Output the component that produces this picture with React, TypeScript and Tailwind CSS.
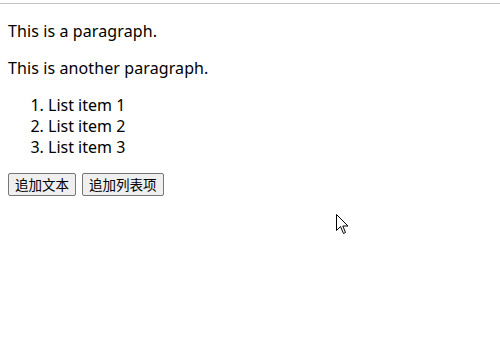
import React from 'react'

const Cursor = () => (
  <svg
    className="absolute left-[336px] top-[214px]"
    width="13"
    height="21"
    viewBox="0 0 13 21"
  >
    <path
      d="M0.5 0.5 L0.5 16.5 L4.5 12.5 L7.5 19.5 L9.5 18.5 L6.8 12 L12 12 Z"
      fill="#fff"
      stroke="#000"
      strokeWidth="1"
      strokeLinejoin="miter"
    />
  </svg>
)

const App = () => {
  const items = ['List item 1', 'List item 2', 'List item 3']

  return (
    <div className="relative w-[500px] h-[340px] bg-white overflow-hidden font-['Noto_Sans','Noto_Sans_CJK_SC',sans-serif] text-black">
      <div className="mt-[3px] border-t border-[#c3c3c3]" />
      <div className="px-2 pt-[17px]">
        <p className="text-base leading-[21px] tracking-[0.1px]">This is a paragraph.</p>
        <p className="mt-4 text-base leading-[21px] tracking-[0.1px]">This is another paragraph.</p>
        <ol className="mt-4 pl-10 list-decimal text-base leading-[21px]">
          {items.map((item) => (
            <li key={item}>{item}</li>
          ))}
        </ol>
        <div className="mt-[15px] flex gap-[6px]">
          <button className="h-[23px] px-[6px] border border-[#767676] rounded-[2px] bg-[#efefef] text-[13.5px] leading-none font-['Noto_Sans_CJK_SC',sans-serif]">
            追加文本
          </button>
          <button className="h-[23px] px-[6px] border border-[#767676] rounded-[2px] bg-[#efefef] text-[13.5px] leading-none font-['Noto_Sans_CJK_SC',sans-serif]">
            追加列表项
          </button>
        </div>
      </div>
      <Cursor />
    </div>
  )
}

export default App
